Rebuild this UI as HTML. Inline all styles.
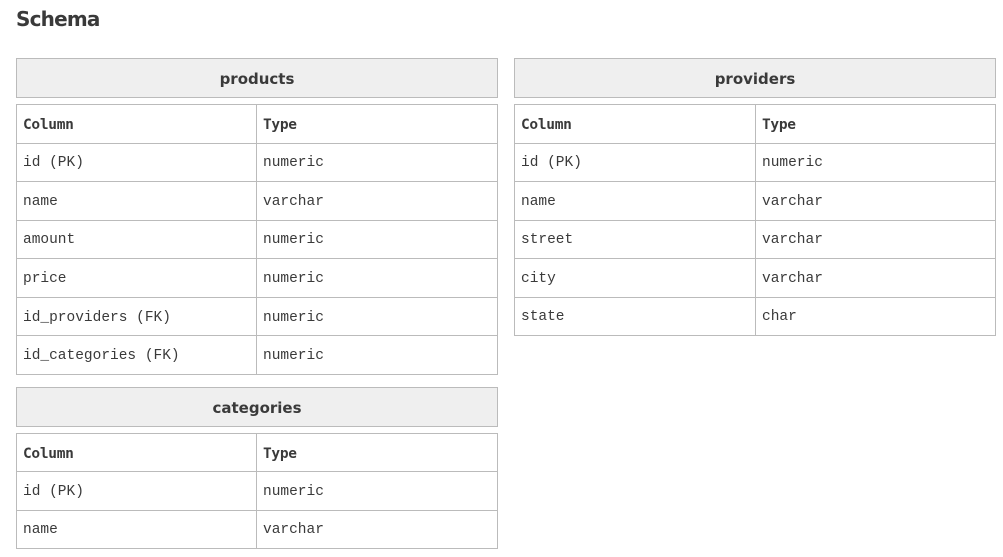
<!DOCTYPE html>
<html><head><meta charset="utf-8"><style>
body{margin:0;background:#fff;color:#3a3a3a;width:1003px;height:557px;position:relative;overflow:hidden}
h1{position:absolute;left:16px;top:7px;margin:0;font:bold 20px "DejaVu Sans","Liberation Sans",sans-serif;letter-spacing:-0.8px}
.hd{position:absolute;box-sizing:border-box;height:40px;border:1px solid #bbb;background:#efefef;text-align:center;font:bold 15px "DejaVu Sans","Liberation Sans",sans-serif;line-height:40px}
table{position:absolute;border-collapse:collapse;table-layout:fixed;font:14.5px "Liberation Mono",monospace}
td{border:1px solid #bbb;padding:2px 0 0 6px;white-space:nowrap}
tr:first-child td{font-weight:bold;font-family:"DejaVu Sans Mono","Liberation Mono",monospace;font-size:14.5px;letter-spacing:-0.3px}
</style></head><body>
<h1>Schema</h1>
<div class="hd" style="left:16px;top:58px;width:482px">products</div>
<table style="left:16px;top:104px;width:482px;height:271px">
<col style="width:240px"><col>
<tr><td>Column</td><td>Type</td></tr>
<tr><td>id (PK)</td><td>numeric</td></tr>
<tr><td>name</td><td>varchar</td></tr>
<tr><td>amount</td><td>numeric</td></tr>
<tr><td>price</td><td>numeric</td></tr>
<tr><td>id_providers (FK)</td><td>numeric</td></tr>
<tr><td>id_categories (FK)</td><td>numeric</td></tr>
</table>
<div class="hd" style="left:16px;top:387px;width:482px">categories</div>
<table style="left:16px;top:433px;width:482px;height:116px">
<col style="width:240px"><col>
<tr><td>Column</td><td>Type</td></tr>
<tr><td>id (PK)</td><td>numeric</td></tr>
<tr><td>name</td><td>varchar</td></tr>
</table>
<div class="hd" style="left:514px;top:58px;width:482px">providers</div>
<table style="left:514px;top:104px;width:482px;height:232px">
<col style="width:241px"><col>
<tr><td>Column</td><td>Type</td></tr>
<tr><td>id (PK)</td><td>numeric</td></tr>
<tr><td>name</td><td>varchar</td></tr>
<tr><td>street</td><td>varchar</td></tr>
<tr><td>city</td><td>varchar</td></tr>
<tr><td>state</td><td>char</td></tr>
</table>
</body></html>
